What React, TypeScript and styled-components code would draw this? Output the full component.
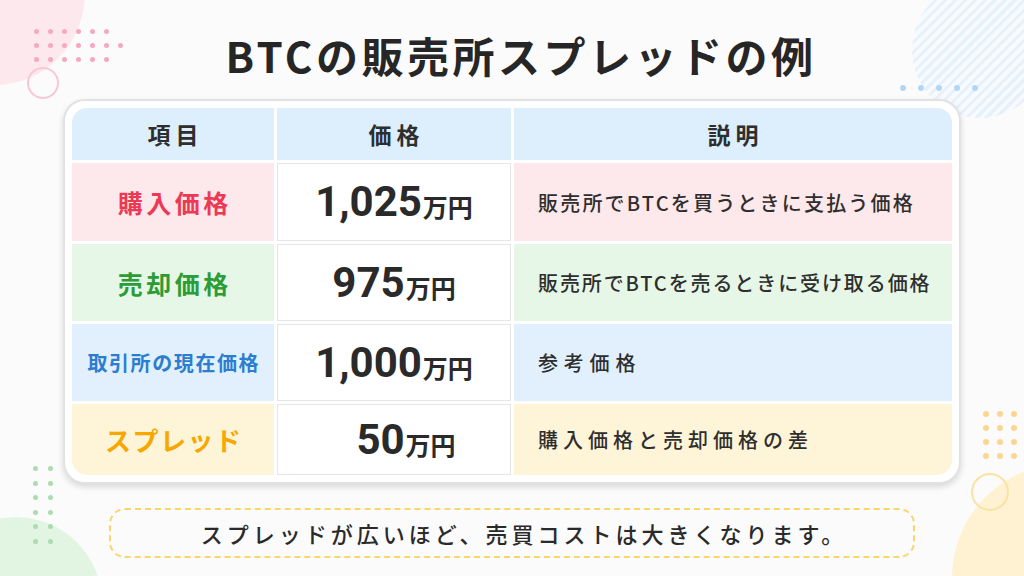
import React from "react";
import styled, { createGlobalStyle, css } from "styled-components";

const GlobalStyle = createGlobalStyle`
  html, body { margin: 0; padding: 0; }
  body {
    background: #fbfbfb;
    font-family: "Noto Sans CJK JP", "Noto Sans", sans-serif;
    color: #2a2a2a;
  }
`;

const Page = styled.div`
  position: relative;
  width: 1024px;
  height: 576px;
  overflow: hidden;
  background: #fbfbfb;
  display: flex;
  flex-direction: column;
  align-items: center;
`;

const Deco = styled.div`
  position: absolute;
  pointer-events: none;
`;

const Blob = styled(Deco)<{ $c: string }>`
  border-radius: 50%;
  background: ${(p) => p.$c};
`;

const StripeBlob = styled(Deco)`
  border-radius: 50%;
  background: repeating-linear-gradient(
    135deg,
    #e6f1fc 0px,
    #e6f1fc 3px,
    #f7fbff 3px,
    #f7fbff 7px
  );
`;

const Ring = styled(Deco)<{ $c: string }>`
  border-radius: 50%;
  border: 2px solid ${(p) => p.$c};
  box-sizing: border-box;
`;

const DotGrid = styled(Deco)<{ $cols: number; $gap: number; $size: number }>`
  display: grid;
  grid-template-columns: repeat(${(p) => p.$cols}, ${(p) => p.$size}px);
  grid-auto-rows: ${(p) => p.$size}px;
  gap: ${(p) => p.$gap}px;
`;

const Dot = styled.span<{ $c: string }>`
  display: block;
  border-radius: 50%;
  background: ${(p) => p.$c};
`;

const Title = styled.h1`
  position: relative;
  margin: 30px 0 0;
  padding-left: 18px;
  height: 50px;
  line-height: 50px;
  font-size: 42px;
  font-weight: 700;
  letter-spacing: 3.5px;
  color: #262626;
  text-align: center;
`;

const Card = styled.div`
  position: relative;
  margin-top: 19px;
  width: 898px;
  box-sizing: border-box;
  padding: 7px;
  background: #ffffff;
  border: 2px solid #e2e2e2;
  border-radius: 22px;
  box-shadow: 0 3px 6px rgba(0, 0, 0, 0.14);
`;

const Grid = styled.div`
  display: grid;
  grid-template-columns: 202px 234px 438px;
  grid-template-rows: 52px 78px 77px 77px 71px;
  gap: 3px;
`;

const HeadCell = styled.div<{ $corner?: "left" | "right" }>`
  background: #ddeefc;
  display: flex;
  align-items: center;
  justify-content: center;
  font-size: 23px;
  font-weight: 700;
  letter-spacing: 5px;
  padding-left: 5px;
  color: #2e2e2e;
  ${(p) => p.$corner === "left" && css`border-top-left-radius: 15px;`}
  ${(p) => p.$corner === "right" && css`border-top-right-radius: 15px;`}
`;

const LabelCell = styled.div<{ $bg: string; $fg: string; $size: number; $ls: number; $bottom?: boolean }>`
  background: ${(p) => p.$bg};
  color: ${(p) => p.$fg};
  display: flex;
  align-items: center;
  justify-content: center;
  font-size: ${(p) => p.$size}px;
  font-weight: 700;
  letter-spacing: ${(p) => p.$ls}px;
  padding-left: ${(p) => p.$ls}px;
  ${(p) => p.$bottom && css`border-bottom-left-radius: 15px;`}
`;

const PriceCell = styled.div<{ $shift?: number }>`
  background: #ffffff;
  border: 1px solid #e6e6e6;
  display: flex;
  align-items: center;
  justify-content: center;
  padding-left: ${(p) => p.$shift ?? 0}px;
  color: #2a2a2a;
`;

const Num = styled.span`
  font-family: "Roboto", "Noto Sans", sans-serif;
  font-weight: 700;
  font-size: 42px;
  line-height: 1;
`;

const Unit = styled.span`
  font-family: "Noto Sans CJK JP", sans-serif;
  font-weight: 700;
  font-size: 25px;
  margin-top: 8px;
  margin-left: 1px;
`;

const DescCell = styled.div<{ $bg: string; $ls: number; $bottom?: boolean }>`
  background: ${(p) => p.$bg};
  display: flex;
  align-items: center;
  padding-left: 24px;
  font-size: 20px;
  font-weight: 500;
  letter-spacing: ${(p) => p.$ls}px;
  color: #2e2e2e;
  ${(p) => p.$bottom && css`border-bottom-right-radius: 15px;`}
`;

const Note = styled.div`
  position: relative;
  margin-top: 24px;
  width: 806px;
  height: 50px;
  box-sizing: border-box;
  border: 2px dashed #fbd46a;
  border-radius: 16px;
  display: flex;
  align-items: center;
  justify-content: center;
  padding-left: 24px;
  font-size: 22px;
  font-weight: 500;
  letter-spacing: 4px;
  color: #2a2a2a;
`;

const dots = (n: number, c: string) =>
  Array.from({ length: n }, (_, i) => <Dot key={i} $c={c} />);

type Row = {
  label: string;
  bg: string;
  fg: string;
  size: number;
  ls: number;
  num: string;
  shift?: number;
  desc: string;
  dls: number;
};

const rows: Row[] = [
  { label: "購入価格", bg: "#fde8eb", fg: "#ec3a55", size: 25, ls: 3.5, num: "1,025", desc: "販売所でBTCを買うときに支払う価格", dls: 2.2 },
  { label: "売却価格", bg: "#e6f7e7", fg: "#2c9c36", size: 25, ls: 3.5, num: "975", desc: "販売所でBTCを売るときに受け取る価格", dls: 1.9 },
  { label: "取引所の現在価格", bg: "#e2f0fd", fg: "#2b7dd0", size: 20, ls: 1.6, num: "1,000", desc: "参考価格", dls: 5.8 },
  { label: "スプレッド", bg: "#fef5d8", fg: "#f6a700", size: 26, ls: 1.5, num: "50", shift: 24, desc: "購入価格と売却価格の差", dls: 5 },
];

export default function App() {
  return (
    <Page>
      <GlobalStyle />
      <Blob $c="#fde9ed" style={{ left: -95, top: -100, width: 180, height: 185 }} />
      <DotGrid $cols={7} $gap={9} $size={5} style={{ left: 34, top: 29 }}>
        {dots(6, "#f5a9c0")}
        <span />
        {dots(7, "#f5a9c0")}
        {dots(6, "#f5a9c0")}
      </DotGrid>
      <Ring $c="#f9c6d4" style={{ left: 27, top: 67, width: 32, height: 32 }} />

      <StripeBlob style={{ left: 912, top: -18, width: 136, height: 136 }} />
      <DotGrid $cols={5} $gap={12} $size={6} style={{ left: 900, top: 85 }}>
        {dots(5, "#b2d7f6")}
      </DotGrid>

      <Blob $c="#e2f5e3" style={{ left: -70, top: 517, width: 172, height: 172 }} />
      <DotGrid $cols={2} $gap={9.5} $size={5} style={{ left: 33, top: 466 }}>
        {dots(12, "#acdcb0")}
      </DotGrid>

      <Blob $c="#fef2d2" style={{ left: 952, top: 463, width: 230, height: 230 }} />
      <DotGrid $cols={3} $gap={8} $size={6} style={{ left: 983, top: 411 }}>
        {dots(12, "#fcd690")}
      </DotGrid>
      <Ring $c="#fbe2a2" style={{ left: 971, top: 473, width: 38, height: 38 }} />

      <Title>BTCの販売所スプレッドの例</Title>

      <Card>
        <Grid>
          <HeadCell $corner="left">項目</HeadCell>
          <HeadCell>価格</HeadCell>
          <HeadCell $corner="right">説明</HeadCell>
          {rows.map((r, i) => {
            const last = i === rows.length - 1;
            return (
              <React.Fragment key={r.label}>
                <LabelCell $bg={r.bg} $fg={r.fg} $size={r.size} $ls={r.ls} $bottom={last}>
                  {r.label}
                </LabelCell>
                <PriceCell $shift={r.shift}>
                  <Num>{r.num}</Num>
                  <Unit>万円</Unit>
                </PriceCell>
                <DescCell $bg={r.bg} $ls={r.dls} $bottom={last}>
                  {r.desc}
                </DescCell>
              </React.Fragment>
            );
          })}
        </Grid>
      </Card>

      <Note>スプレッドが広いほど、売買コストは大きくなります。</Note>
    </Page>
  );
}
